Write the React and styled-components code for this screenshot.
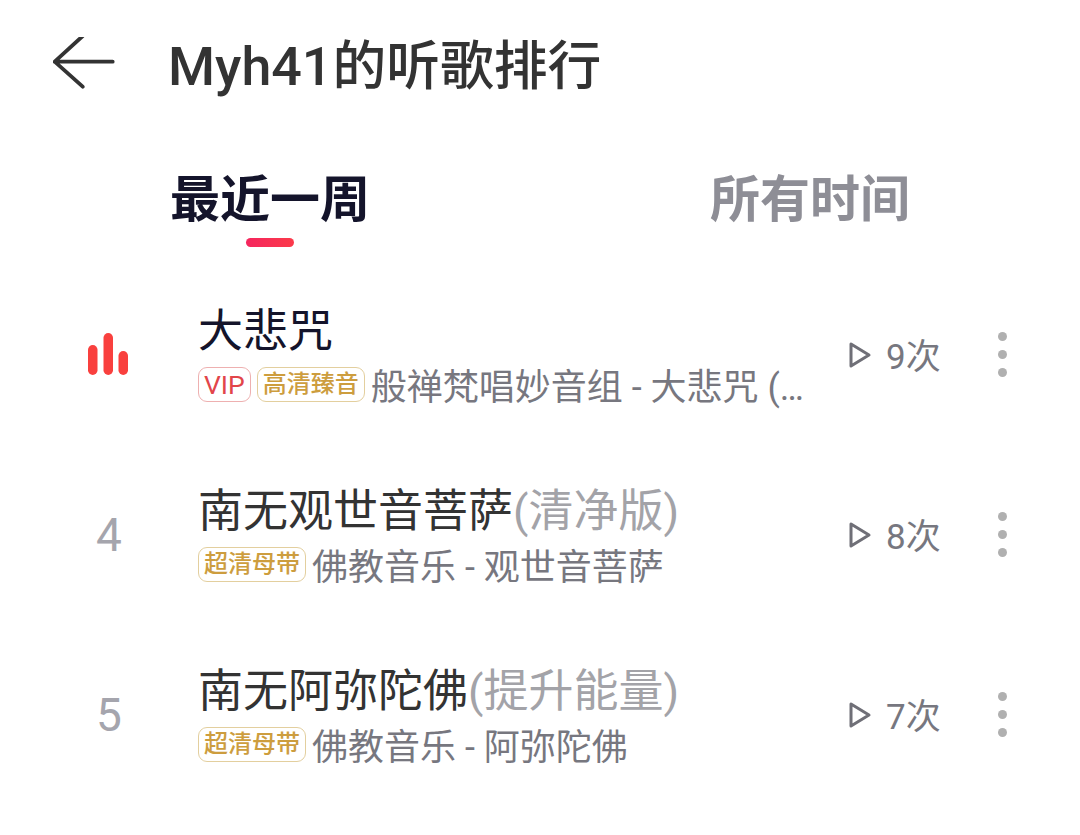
import React from "react";
import styled, { createGlobalStyle } from "styled-components";

const Global = createGlobalStyle`
  html, body { margin: 0; padding: 0; background: #fff; }
  body { font-family: Roboto, "Noto Sans CJK SC", sans-serif; }
`;

const Page = styled.div`
  width: 1080px;
  height: 835px;
  overflow: hidden;
  background: #fff;
`;

const Header = styled.header`
  display: flex;
  align-items: center;
  height: 130px;
  padding-left: 53px;
  box-sizing: border-box;
`;

const BackIcon = styled.svg`
  width: 62px;
  height: 56px;
  margin-right: 53px;
  flex: none;
`;

const Title = styled.h1`
  margin: 0;
  padding-top: 3px;
  font-size: 53.8px;
  font-weight: 500;
  line-height: 60px;
  color: #333;
  white-space: nowrap;
`;

const Tabs = styled.nav`
  display: flex;
  justify-content: space-between;
  width: 740px;
  margin-left: 170px;
  height: 135px;
`;

const Tab = styled.div`
  position: relative;
  width: 200px;
  font-size: 50px;
  font-weight: 700;
  line-height: 60px;
  padding-top: 40px;
  white-space: nowrap;
  color: ${(p) => (p.$active ? "#14142b" : "#8e8e96")};
  ${(p) =>
    p.$active &&
    `&::after {
      content: "";
      position: absolute;
      left: 76px;
      top: 108px;
      width: 48px;
      height: 9px;
      border-radius: 5px;
      background: linear-gradient(90deg, #f5265e, #fb3a4a);
    }`}
`;

const List = styled.ol`
  list-style: none;
  margin: 0;
  padding: 0;
`;

const Row = styled.li`
  display: flex;
  align-items: center;
  height: 180px;
`;

const Rank = styled.div`
  width: 198px;
  padding-left: 88px;
  box-sizing: border-box;
  flex: none;
  font-size: 46px;
  color: #a5a5ad;
`;

const RankNumber = styled.span`
  display: block;
  width: 42px;
  text-align: center;
`;

const Main = styled.div`
  width: 608px;
  flex: none;
  min-width: 0;
  padding-top: 7px;
`;

const SongTitle = styled.div`
  font-size: 45px;
  line-height: 56px;
  white-space: nowrap;
  color: ${(p) => (p.$active ? "#14142b" : "#333")};
`;

const Version = styled.span`
  color: #a3a3a8;
`;

const Meta = styled.div`
  display: flex;
  align-items: center;
  gap: 6px;
  height: 50px;
  margin-top: 3px;
`;

const Badge = styled.span`
  flex: none;
  box-sizing: border-box;
  height: 35px;
  margin-bottom: 7px;
  padding: 0 5px;
  display: inline-flex;
  align-items: center;
  font-size: ${(p) => (p.$kind === "vip" ? "26.5px" : "24px")};
  font-weight: ${(p) => (p.$kind === "vip" ? 400 : 500)};
  line-height: 33px;
  border-radius: 9px;
  border: 1px solid ${(p) => (p.$kind === "vip" ? "#eeb0b0" : "#e3cf9e")};
  color: ${(p) => (p.$kind === "vip" ? "#e2454a" : "#cd9d3e")};
`;

const Artist = styled.span`
  font-size: 36px;
  line-height: 50px;
  color: #77777f;
  white-space: nowrap;
`;

const Plays = styled.div`
  display: flex;
  align-items: center;
  width: 150px;
  margin-left: 42px;
  flex: none;
  font-size: 35px;
  color: #77777f;
`;

const PlayIcon = styled.svg`
  width: 24px;
  height: 28px;
  margin-right: 14px;
  flex: none;
`;

const Count = styled.span`
  white-space: nowrap;
  margin-bottom: 4px;
`;

const More = styled.div`
  display: flex;
  flex-direction: column;
  gap: 9px;
  flex: none;
  margin-bottom: 2px;
`;

const Dot = styled.i`
  display: block;
  width: 9px;
  height: 9px;
  border-radius: 50%;
  background: #b0b0b0;
`;

const songs = [
  { title: "大悲咒", playing: true, badges: [["vip", "VIP"], ["gold", "高清臻音"]], artist: "般禅梵唱妙音组 - 大悲咒 (…", count: "9次" },
  { title: "南无观世音菩萨", version: "(清净版)", rank: 4, badges: [["gold", "超清母带"]], artist: "佛教音乐 - 观世音菩萨", count: "8次" },
  { title: "南无阿弥陀佛", version: "(提升能量)", rank: 5, badges: [["gold", "超清母带"]], artist: "佛教音乐 - 阿弥陀佛", count: "7次" },
];

const Bars = () => (
  <svg width="42" height="44" viewBox="0 1 42 44" fill="#f9403e" style={{ display: "block" }}>
    <rect x="0" y="13" width="9.5" height="30" rx="4.75" />
    <rect x="15.5" y="1" width="9.5" height="42" rx="4.75" />
    <rect x="30.5" y="19" width="9.5" height="24" rx="4.75" />
  </svg>
);

export default function App() {
  return (
    <Page>
      <Global />
      <Header>
        <BackIcon viewBox="0 4 62 56" fill="none" stroke="#333" strokeWidth="3.8" strokeLinecap="round" strokeLinejoin="round">
          <path d="M59.7 28.7H1.7M29.7 3 1.7 28.7l28 25" />
        </BackIcon>
        <Title>Myh41的听歌排行</Title>
      </Header>
      <Tabs>
        <Tab $active>最近一周</Tab>
        <Tab>所有时间</Tab>
      </Tabs>
      <List>
        {songs.map((s) => (
          <Row key={s.title}>
            <Rank>{s.playing ? <Bars /> : <RankNumber>{s.rank}</RankNumber>}</Rank>
            <Main>
              <SongTitle $active={s.playing}>
                {s.title}
                {s.version && <Version>{s.version}</Version>}
              </SongTitle>
              <Meta>
                {s.badges.map(([k, t]) => (
                  <Badge key={t} $kind={k}>{t}</Badge>
                ))}
                <Artist>{s.artist}</Artist>
              </Meta>
            </Main>
            <Plays>
              <PlayIcon viewBox="0 0 24 28" fill="none" stroke="#6f6f77" strokeWidth="3" strokeLinejoin="round">
                <path d="M3 3v22l18-11z" />
              </PlayIcon>
              <Count>{s.count}</Count>
            </Plays>
            <More>
              <Dot /><Dot /><Dot />
            </More>
          </Row>
        ))}
      </List>
    </Page>
  );
}
